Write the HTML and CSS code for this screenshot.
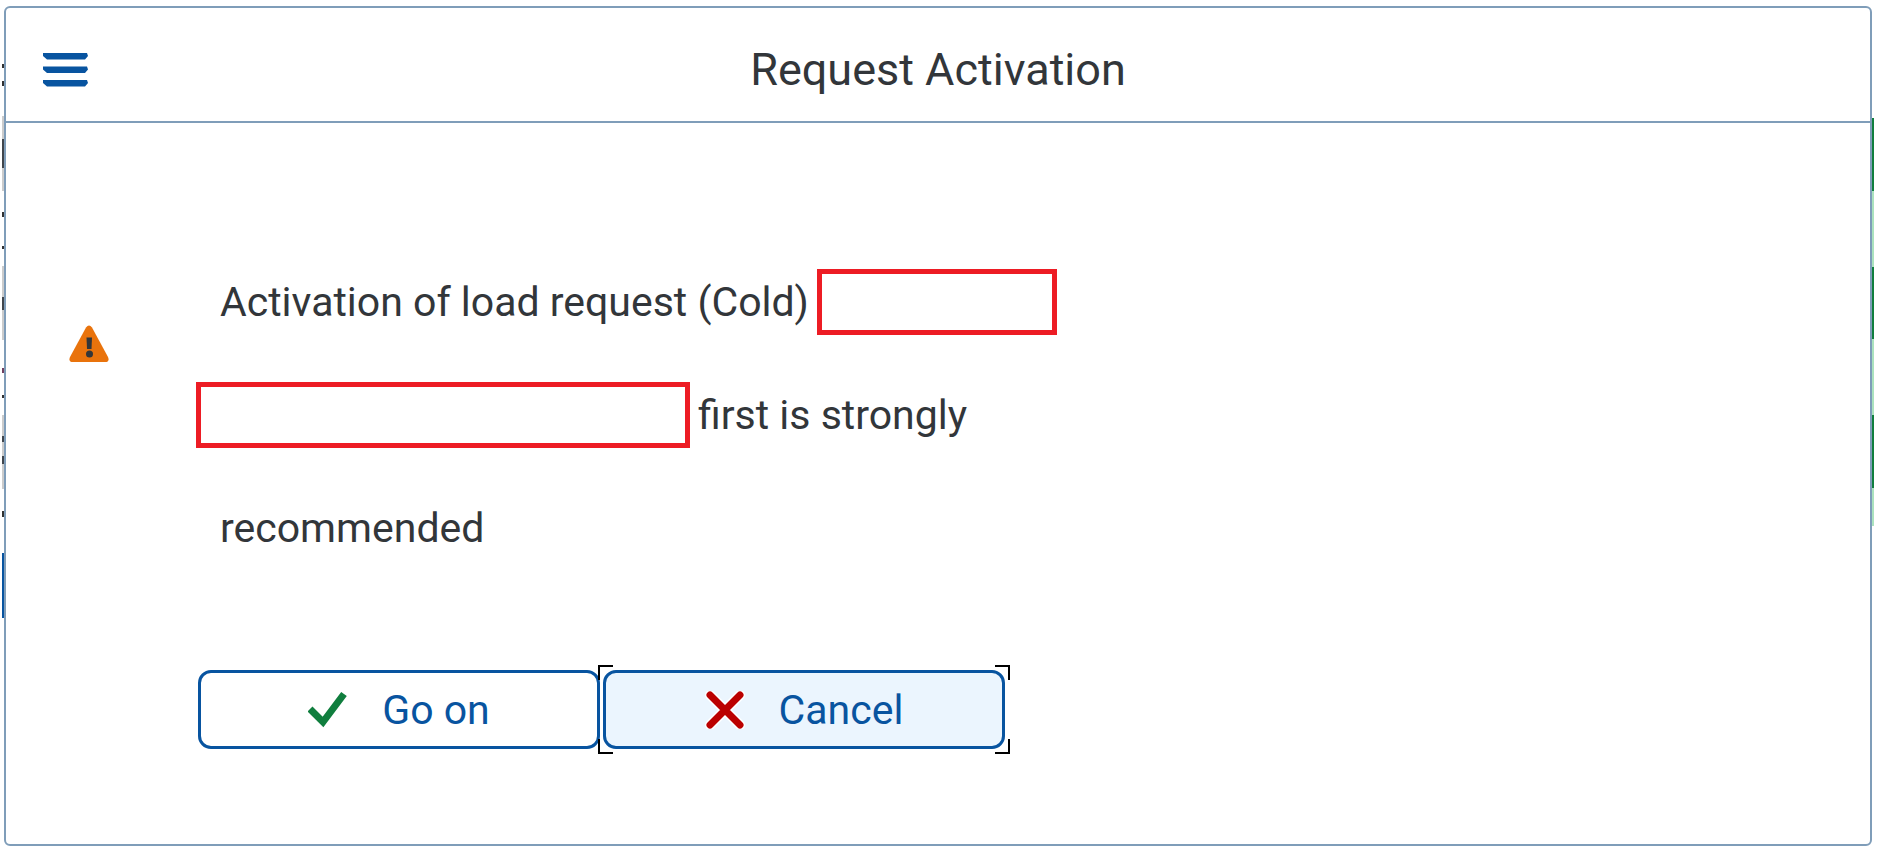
FILE: index.html
```
<!DOCTYPE html>
<html lang="en">
<head>
  <meta charset="UTF-8">
  <meta name="viewport" content="width=device-width, initial-scale=1.0">
  <title>Request Activation</title>
  <link rel="stylesheet" href="styles.css">
</head>
<body>
  <div class="edge edge-left"></div>
  <div class="dialog" role="dialog" aria-labelledby="dialogTitle">
    <header class="dialog-header">
      <button class="menu-button" type="button" aria-label="Menu">
        <svg width="48" height="36" viewBox="0 0 48 36" fill="#0854a0">
          <path d="M1 1h44l1 3-3 3.500H5L1 4zM1 14.500h44l1 3-3 3.500H5l-4-3.500zM1 28h44l1 3-3 3.500H5L1 31z"/>
        </svg>
      </button>
      <h1 id="dialogTitle">Request Activation</h1>
    </header>

    <main class="dialog-body">
      <svg class="warning-icon" width="40" height="38" viewBox="0 0 40 38">
        <path d="M17 2.500q3-4 6 0L39 32q2 5-3 5H4q-5 0-3-5z" fill="#e9730c"/>
        <path d="M17.500 12.500h5.500l-.5 11.500h-4.500z" fill="#32363a"/>
        <circle cx="20.500" cy="29" r="3.500" fill="#32363a"/>
      </svg>

      <div class="content">
        <div class="message">
          <p class="line indent">Activation of load request (Cold) <span class="redacted short"></span></p>
          <p class="line"><span class="redacted long"></span> first is strongly</p>
          <p class="line indent">recommended</p>
        </div>

        <div class="actions">
          <button class="action" type="button">
            <svg width="40" height="38" viewBox="0 0 40 38">
              <path d="M2 18l13 13L36 3" fill="none" stroke="#107e3e" stroke-width="7"/>
            </svg>
            <span>Go on</span>
          </button>
          <button class="action focused" type="button">
            <svg width="40" height="38" viewBox="0 0 40 38" fill="none" stroke-linecap="round">
              <path d="M5 4l30 30M35 4L5 34" stroke="#fff" stroke-width="10"/>
              <path d="M5 4l30 30M35 4L5 34" stroke="#bb0000" stroke-width="7"/>
            </svg>
            <span>Cancel</span>
          </button>
        </div>
      </div>
    </main>
  </div>
  <div class="edge edge-right"></div>
</body>
</html>
```
FILE: styles.css
```
* {
  box-sizing: border-box;
}
body {
  display: flex;
  min-height: 100vh;
  margin: 0;
  padding: 6px 3px 0 2px;
  font-family: Roboto, "Liberation Sans", sans-serif;
  background-color: #fff;
  color: #32363a;
}

/* Slivers of the window behind the dialog */
.edge {
  width: 2px;
}
.edge-left {
  background: linear-gradient(
    #fff 58px, #323232 58px 62px, #fff 62px 75px, #323232 75px 80px,
    #fff 80px 110px, #ccc 110px 133px, #40464c 133px 162px, #ccc 162px 185px,
    #fff 185px 206px, #323232 206px 211px, #fff 211px 240px, #323232 240px 243px,
    #fff 243px 260px, #ccc 260px 291px, #40464c 291px 304px, #ccc 304px 334px,
    #fff 334px 362px, #704060 362px 367px, #fff 367px 389px, #323232 389px 392px,
    #fff 392px 409px, #ccc 409px 430px, #40464c 430px 436px, #ccc 436px 450px,
    #40464c 450px 458px, #ccc 458px 483px, #fff 483px 505px, #323232 505px 511px,
    #fff 511px 547px, #0854a0 547px 612px, #fff 612px);
}
.edge-right {
  background: linear-gradient(
    #fff 112px, #107e3e 112px 185px, #abe2be 185px 261px,
    #107e3e 261px 333px, #abe2be 333px 409px,
    #107e3e 409px 482px, #abe2be 482px 520px, #fff 520px);
}

.dialog {
  flex: 1;
  border: 2px solid #7f9db9;
  border-radius: 6px;
}
.dialog-header {
  display: grid;
  grid-template-columns: 108px 1fr 108px;
  align-items: center;
  height: 115px;
  padding-top: 10px;
  border-bottom: 2px solid #7f9db9;
}
.menu-button {
  display: flex;
  padding: 0 0 0 36px;
  border: none;
  background: none;
  cursor: pointer;
}
h1 {
  margin: 0;
  font-size: 45px;
  font-weight: 400;
  line-height: 52px;
  text-align: center;
}

.dialog-body {
  display: grid;
  grid-template-columns: 126px 1fr;
  padding: 122px 0 90px 63px;
}
.warning-icon {
  margin-top: 80px;
}
.content {
  padding-left: 1px;
}
.line {
  display: flex;
  align-items: center;
  gap: 8px;
  height: 113px;
  margin: 0;
  font-size: 41px;
  line-height: 48px;
}
.indent {
  padding-left: 24px;
}
.redacted {
  height: 66px;
  border: 5px solid #ed1c24;
}
.short {
  width: 240px;
}
.long {
  width: 494px;
}

.actions {
  display: flex;
  gap: 3px;
  padding: 86px 0 0 2px;
}
.action {
  position: relative;
  display: flex;
  align-items: center;
  justify-content: center;
  gap: 34px;
  width: 402px;
  height: 79px;
  padding: 0;
  border: 3px solid #0854a0;
  border-radius: 13px;
  background-color: #fff;
  color: #0854a0;
  font-family: inherit;
  font-size: 41px;
  cursor: pointer;
}
.focused {
  background-color: #ebf5fe;
  outline: none;
}
/* Corner brackets around the focused button */
.focused::after {
  content: "";
  position: absolute;
  inset: -8px;
  background:
    linear-gradient(#000, #000) 0 0 / 15px 2px,
    linear-gradient(#000, #000) 0 0 / 2px 15px,
    linear-gradient(#000, #000) 100% 0 / 15px 2px,
    linear-gradient(#000, #000) 100% 0 / 2px 15px,
    linear-gradient(#000, #000) 0 100% / 15px 2px,
    linear-gradient(#000, #000) 0 100% / 2px 15px,
    linear-gradient(#000, #000) 100% 100% / 15px 2px,
    linear-gradient(#000, #000) 100% 100% / 2px 15px;
  background-repeat: no-repeat;
}
```
